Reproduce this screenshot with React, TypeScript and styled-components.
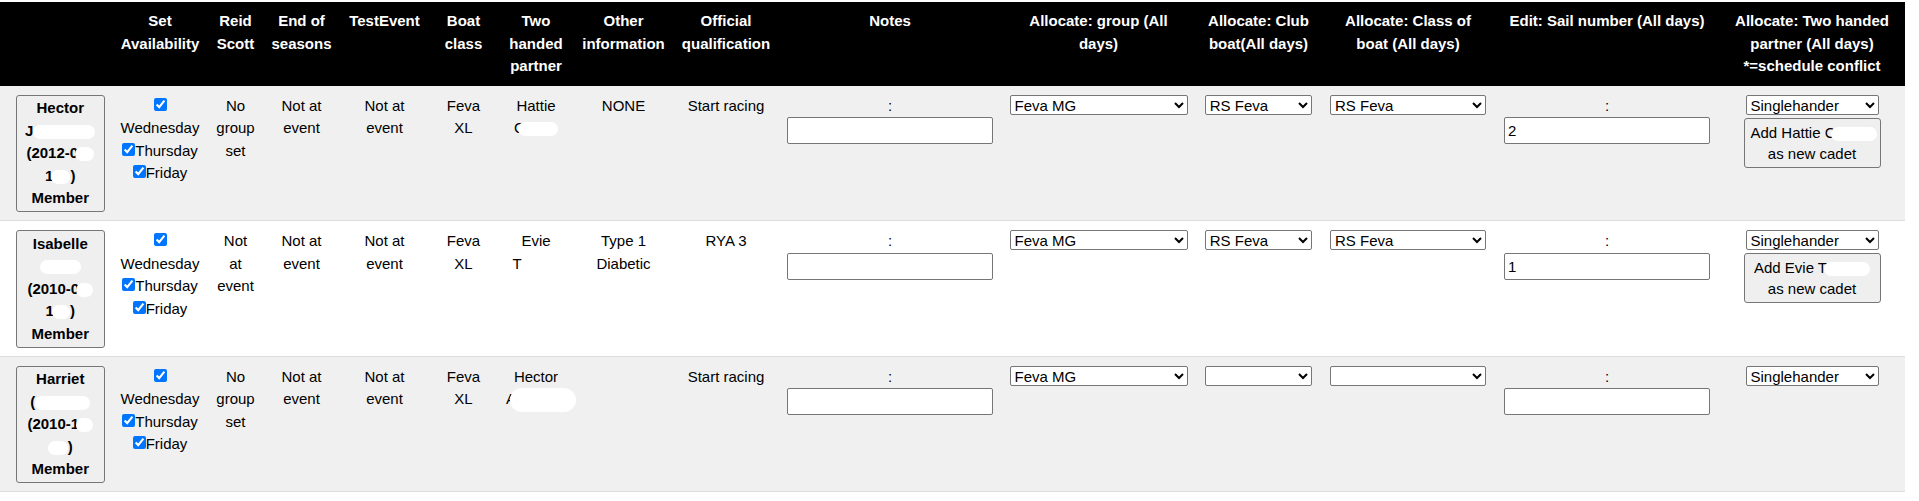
import React from "react";
import styled, { createGlobalStyle } from "styled-components";

const GlobalStyle = createGlobalStyle`
  html, body { margin: 0; padding: 0; background: #fff; }
  body {
    padding-top: 2px;
    font-family: "Liberation Sans", Arial, sans-serif;
    font-size: 15px;
    color: #000;
  }
`;

const FONT = `"Liberation Sans", Arial, sans-serif`;

const Table = styled.table`
  width: 1905px;
  border-collapse: collapse;
  table-layout: fixed;
  line-height: 22.5px;
`;

const Col = styled.col<{ $w: number }>`
  width: ${(p) => p.$w}px;
`;

const HeadCell = styled.th`
  background: #000;
  color: #fff;
  font-weight: 700;
  text-align: center;
  vertical-align: top;
  padding: 8px;
`;

const Row = styled.tr<{ $shade: boolean }>`
  background: ${(p) => (p.$shade ? "#f0f0f0" : "#ffffff")};
`;

const Cell = styled.td`
  padding: 9px 8px 8px;
  text-align: center;
  vertical-align: top;
  border-bottom: 1px solid #dddddd;
`;

const NameCell = styled(Cell)`
  padding-left: 16px;
  text-align: left;
`;

const MemberButton = styled.button`
  display: block;
  box-sizing: border-box;
  width: 88.5px;
  margin: 0;
  padding: 1.5px 4px;
  border: 1px solid #767676;
  border-radius: 3px;
  background: #efefef;
  color: #000;
  font: 700 15px/22.5px ${FONT};
  text-align: center;
`;

const Line = styled.span`
  display: block;
  white-space: nowrap;
`;

const Blob = styled.span<{ $w: number; $h?: number; $ml?: number }>`
  display: inline-block;
  width: ${(p) => p.$w}px;
  height: ${(p) => p.$h ?? 14}px;
  margin-left: ${(p) => p.$ml ?? 0}px;
  background: #fff;
  border-radius: 999px;
  vertical-align: middle;
`;

const Check = styled.input`
  margin: 0;
  width: 13px;
  height: 13px;
`;

const Stack = styled.div<{ $gap: number }>`
  display: flex;
  flex-direction: column;
  align-items: center;
  gap: ${(p) => p.$gap}px;
`;

const Select = styled.select<{ $w: number }>`
  display: block;
  box-sizing: border-box;
  width: ${(p) => p.$w}px;
  height: 20px;
  margin: 0 auto;
  border: 1px solid #767676;
  border-radius: 2px;
  background: #fff;
  color: #000;
  font: 15px ${FONT};
`;

const TextInput = styled.input`
  display: block;
  box-sizing: border-box;
  width: 206px;
  height: 27px;
  margin: 0 auto;
  padding: 1px 3px;
  border: 1px solid #767676;
  border-radius: 2px;
  background: #fff;
  color: #000;
  font: 15px ${FONT};
`;

const AddButton = styled.button`
  box-sizing: border-box;
  width: 137px;
  margin: 0;
  padding: 3px 6px;
  border: 1px solid #767676;
  border-radius: 3px;
  background: #efefef;
  color: #000;
  font: 15px/21px ${FONT};
  text-align: center;
`;

const widths = [112, 96, 55, 77, 89, 69, 76, 99, 106, 222, 195, 125, 174, 224, 186];

const headers = [
  "",
  "Set Availability",
  "Reid Scott",
  "End of seasons",
  "TestEvent",
  "Boat class",
  "Two handed partner",
  "Other information",
  "Official qualification",
  "Notes",
  "Allocate: group (All days)",
  "Allocate: Club boat(All days)",
  "Allocate: Class of boat (All days)",
  "Edit: Sail number (All days)",
  "Allocate: Two handed partner (All days) *=schedule conflict",
];

type Entry = {
  name: React.ReactNode[];
  reid: string;
  partner: React.ReactNode[];
  other: string;
  qual: string;
  club: string;
  boatClass: string;
  sail: string;
  add: React.ReactNode | null;
};

const rows: Entry[] = [
  {
    name: [
      "Hector",
      <>J<Blob $w={62} /></>,
      <>(2012-0<Blob $w={19} $ml={-3} /></>,
      <>1<Blob $w={19} $ml={-2} />)</>,
      "Member",
    ],
    reid: "No group set",
    partner: ["Hattie", <>C<Blob $w={40} $ml={-7} /></>],
    other: "NONE",
    qual: "Start racing",
    club: "RS Feva",
    boatClass: "RS Feva",
    sail: "2",
    add: <>Add Hattie C<Blob $w={46} $ml={-5} /></>,
  },
  {
    name: [
      "Isabelle",
      <><Blob $w={41} /></>,
      <>(2010-0<Blob $w={17} $ml={-3} /></>,
      <>1<Blob $w={18} $ml={-2} />)</>,
      "Member",
    ],
    reid: "Not at event",
    partner: ["Evie", <>T<Blob $w={40} $ml={-2} /></>],
    other: "Type 1 Diabetic",
    qual: "RYA 3",
    club: "RS Feva",
    boatClass: "RS Feva",
    sail: "1",
    add: <>Add Evie T<Blob $w={46} $ml={-3} /></>,
  },
  {
    name: [
      "Harriet",
      <>(<Blob $w={55} /></>,
      <>(2010-1<Blob $w={17} $ml={-3} /></>,
      <><Blob $w={20} />)</>,
      "Member",
    ],
    reid: "No group set",
    partner: ["Hector", <>A<Blob $w={66} $h={24} $ml={-6} /></>],
    other: "",
    qual: "Start racing",
    club: "",
    boatClass: "",
    sail: "",
    add: null,
  },
];

const Availability: React.FC = () => (
  <>
    <Check type="checkbox" defaultChecked />
    Wednesday
    <br />
    <Check type="checkbox" defaultChecked />
    Thursday
    <br />
    <Check type="checkbox" defaultChecked />
    Friday
  </>
);

const BoatSelect: React.FC<{ w: number; value: string; options: string[] }> = ({ w, value, options }) => (
  <Select $w={w} defaultValue={value}>
    {options.map((o) => (
      <option key={o} value={o}>
        {o}
      </option>
    ))}
  </Select>
);

export default function App() {
  return (
    <>
      <GlobalStyle />
      <Table>
        <colgroup>
          {widths.map((w, i) => (
            <Col key={i} $w={w} />
          ))}
        </colgroup>
        <thead>
          <tr>
            {headers.map((h, i) => (
              <HeadCell key={i}>{h}</HeadCell>
            ))}
          </tr>
        </thead>
        <tbody>
          {rows.map((r, i) => (
            <Row key={i} $shade={i % 2 === 0}>
              <NameCell>
                <MemberButton>
                  {r.name.map((n, j) => (
                    <Line key={j}>{n}</Line>
                  ))}
                </MemberButton>
              </NameCell>
              <Cell>
                <Availability />
              </Cell>
              <Cell>{r.reid}</Cell>
              <Cell>Not at event</Cell>
              <Cell>Not at event</Cell>
              <Cell>Feva XL</Cell>
              <Cell>
                {r.partner.map((p, j) => (
                  <Line key={j}>{p}</Line>
                ))}
              </Cell>
              <Cell>{r.other}</Cell>
              <Cell>{r.qual}</Cell>
              <Cell>
                <div>:</div>
                <TextInput type="text" defaultValue="" />
              </Cell>
              <Cell>
                <BoatSelect w={178} value="Feva MG" options={["Feva MG", "Feva Green", "Feva Red"]} />
              </Cell>
              <Cell>
                <BoatSelect w={107.5} value={r.club} options={["", "RS Feva"]} />
              </Cell>
              <Cell>
                <BoatSelect w={156} value={r.boatClass} options={["", "RS Feva"]} />
              </Cell>
              <Cell>
                <div>:</div>
                <TextInput type="text" defaultValue={r.sail} />
              </Cell>
              <Cell>
                <Stack $gap={3}>
                  <BoatSelect w={133} value="Singlehander" options={["Singlehander"]} />
                  {r.add && (
                    <AddButton>
                      <Line>{r.add}</Line>
                      <Line>as new cadet</Line>
                    </AddButton>
                  )}
                </Stack>
              </Cell>
            </Row>
          ))}
        </tbody>
      </Table>
    </>
  );
}
